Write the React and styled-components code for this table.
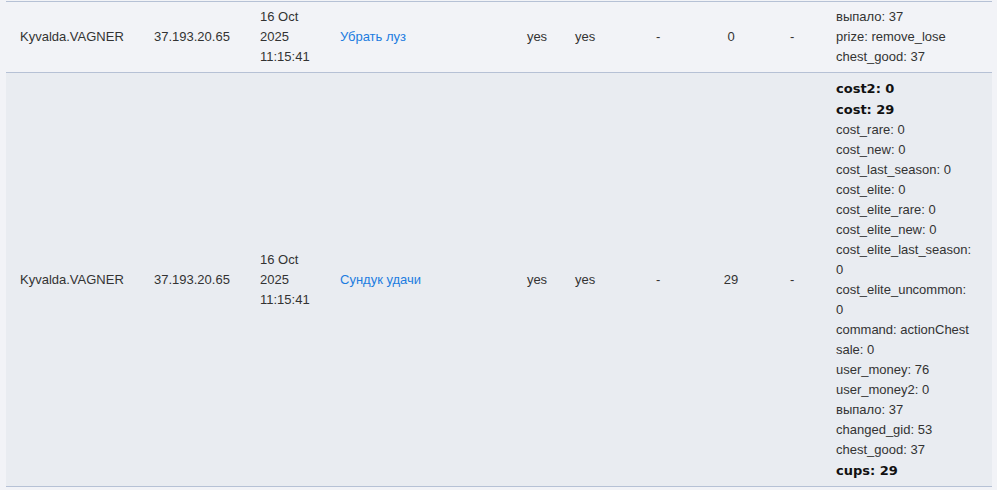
import React from "react";
import styled, { createGlobalStyle } from "styled-components";

const BORDER = "#b6c1d5";

const GlobalStyle = createGlobalStyle`
    html, body {
        margin: 0;
        padding: 0;
        background: #f2f3f7;
    }
    body {
        font-family: "Liberation Sans", Arial, sans-serif;
        font-size: 13px;
        color: #333;
    }
`;

const Table = styled.table`
    margin: 1px 0 0 6px;
    width: 986px;
    border-collapse: collapse;
    table-layout: fixed;
    line-height: 20px;
`;

const Row = styled.tr`
    background: ${(p) => (p.$alt ? "#e9ecf1" : "#f2f3f7")};
    border-top: 1px solid ${BORDER};
    border-bottom: 1px solid ${BORDER};
`;

const Cell = styled.td`
    padding: 5px 14px;
    vertical-align: middle;
    text-align: ${(p) => p.$align || "left"};
    word-wrap: break-word;
`;

const FlagCell = styled(Cell)`
    padding-left: 4px;
    padding-right: 4px;
`;

const ParamsCell = styled(Cell)`
    padding-right: 18px;
`;

const Link = styled.a`
    color: #1c7ce0;
    text-decoration: none;
`;

const Param = styled.div`
    white-space: normal;
`;

const Strong = styled.div`
    font-family: "DejaVu Sans", Verdana, sans-serif;
    font-weight: bold;
    line-height: 21px;
    color: #111;
`;

const COLS = [134, 106, 80, 187, 48, 81, 44, 90, 46, 170];

const rows = [
    {
        user: "Kyvalda.VAGNER",
        ip: "37.193.20.65",
        date: "16 Oct 2025 11:15:41",
        action: "Убрать луз",
        a: "yes",
        b: "yes",
        c: "-",
        cost: "0",
        d: "-",
        params: [
            ["выпало: 37"],
            ["prize: remove_lose"],
            ["chest_good: 37"],
        ],
    },
    {
        user: "Kyvalda.VAGNER",
        ip: "37.193.20.65",
        date: "16 Oct 2025 11:15:41",
        action: "Сундук удачи",
        a: "yes",
        b: "yes",
        c: "-",
        cost: "29",
        d: "-",
        alt: true,
        params: [
            ["cost2: 0", true],
            ["cost: 29", true],
            ["cost_rare: 0"],
            ["cost_new: 0"],
            ["cost_last_season: 0"],
            ["cost_elite: 0"],
            ["cost_elite_rare: 0"],
            ["cost_elite_new: 0"],
            ["cost_elite_last_season: 0"],
            ["cost_elite_uncommon: 0"],
            ["command: actionChest"],
            ["sale: 0"],
            ["user_money: 76"],
            ["user_money2: 0"],
            ["выпало: 37"],
            ["changed_gid: 53"],
            ["chest_good: 37"],
            ["cups: 29", true],
        ],
    },
];

const App = () => (
    <>
        <GlobalStyle />
        <Table>
            <colgroup>
                {COLS.map((w, i) => (
                    <col key={i} style={{ width: w }} />
                ))}
            </colgroup>
            <tbody>
                {rows.map((r, i) => (
                    <Row key={i} $alt={r.alt}>
                        <Cell>{r.user}</Cell>
                        <Cell>{r.ip}</Cell>
                        <Cell>{r.date}</Cell>
                        <Cell>
                            <Link href="#">{r.action}</Link>
                        </Cell>
                        <FlagCell $align="center">{r.a}</FlagCell>
                        <Cell>{r.b}</Cell>
                        <Cell>{r.c}</Cell>
                        <Cell $align="center">{r.cost}</Cell>
                        <Cell>{r.d}</Cell>
                        <ParamsCell>
                            {r.params.map(([text, bold]) =>
                                bold ? (
                                    <Strong key={text}>{text}</Strong>
                                ) : (
                                    <Param key={text}>{text}</Param>
                                )
                            )}
                        </ParamsCell>
                    </Row>
                ))}
            </tbody>
        </Table>
    </>
);

export default App;
